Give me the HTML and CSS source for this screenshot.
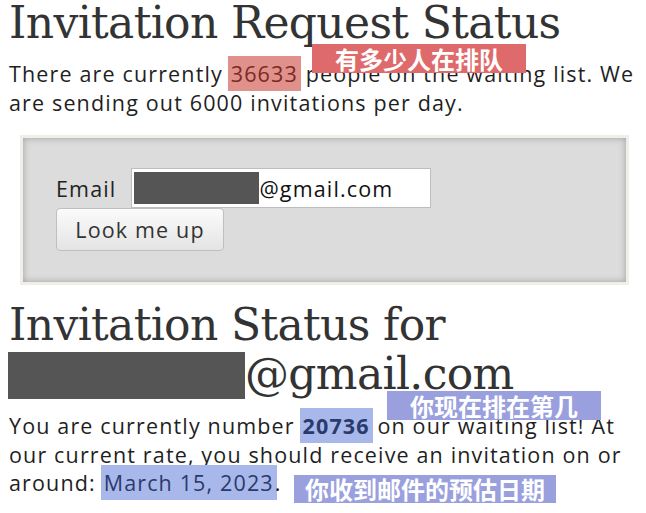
FILE: index.html
```html
<!DOCTYPE html>
<html lang="en">
<head>
<meta charset="utf-8">
<title>Invitation Request Status</title>
<link rel="stylesheet" href="styles.css">
</head>
<body>
<div class="page">
  <h1 class="title">Invitation Request Status</h1>
  <p class="text">There are currently <span class="hl hl-red">36633</span> people on the waiting list. We are sending out 6000 invitations per day.</p>

  <form class="lookup">
    <div class="field">
      <label class="label" for="email">Email</label>
      <div class="input" id="email"><span class="redact redact-sm"></span>@gmail.com</div>
    </div>
    <button class="btn" type="button">Look me up</button>
  </form>

  <h1 class="title title-2">Invitation Status for <span class="redact redact-lg"></span>@gmail.com</h1>
  <p class="text text-2">You are currently number <strong class="hl hl-blue">20736</strong> on our waiting list! At our current rate, you should receive an invitation on or around: <span class="hl hl-blue">March 15, 2023</span>.</p>

  <span class="note note-red">有多少人在排队</span>
  <span class="note note-blue note-rank">你现在排在第几</span>
  <span class="note note-blue note-date">你收到邮件的预估日期</span>
</div>
</body>
</html>
```

FILE: styles.css
```css
html, body {
  margin: 0;
  padding: 0;
  background: #ffffff;
}

.page {
  position: relative;
  width: 646px;
  height: 513px;
  overflow: hidden;
  padding: 0 6px 0 9px;
  box-sizing: border-box;
  color: #1f1f1f;
}

.title {
  margin: 0;
  font-family: "DejaVu Serif", "Liberation Serif", serif;
  font-weight: normal;
  font-size: 44px;
  line-height: 46px;
  color: #333333;
  letter-spacing: -0.65px;
}

.title-2 {
  margin-top: 15px;
  line-height: 49px;
}

.text {
  margin: 14px 0 0 0;
  font-family: "Open Sans", "DejaVu Sans", sans-serif;
  font-size: 21.5px;
  line-height: 28.5px;
  letter-spacing: 1.15px;
  color: #1f1f1f;
}

.text-2 {
  margin-top: 13px;
}

.hl {
  padding: 3px 3px;
  margin: 0 -2px;
}

.hl-red {
  background: #e0918b;
  color: #7a2a22;
}

.hl-blue {
  background: #a8b8ea;
  color: #2b3a6c;
}

strong.hl-blue {
  font-weight: bold;
}

.lookup {
  margin: 18px 11px 0 11px;
  border: 3px solid #f1eeea;
  background: #dcdcdc;
  box-shadow: inset 0 0 7px rgba(0, 0, 0, 0.28);
  padding: 30px 33px 31px 33px;
}

.field {
  display: flex;
  align-items: center;
  gap: 15px;
}

.label {
  font-family: "Open Sans", "DejaVu Sans", sans-serif;
  font-size: 21.5px;
  letter-spacing: 1.15px;
  color: #222222;
}

.input {
  display: flex;
  align-items: center;
  width: 300px;
  height: 40px;
  box-sizing: border-box;
  background: #ffffff;
  border: 1px solid #bdbdbd;
  padding: 0 2px;
  font-family: "Open Sans", "DejaVu Sans", sans-serif;
  font-size: 21.5px;
  letter-spacing: 1.15px;
  color: #111111;
}

.redact {
  display: inline-block;
  background: #555555;
}

.redact-sm {
  width: 125px;
  height: 32px;
}

.redact-lg {
  width: 237px;
  height: 47px;
  vertical-align: -10px;
  margin-left: -1px;
}

.btn {
  display: block;
  width: 168px;
  height: 43px;
  border: 1px solid #bfbfbf;
  border-radius: 4px;
  background: linear-gradient(#fbfbfb, #e4e4e4);
  font-family: "Open Sans", "DejaVu Sans", sans-serif;
  font-size: 21.5px;
  letter-spacing: 1.15px;
  color: #333333;
  padding: 0;
}

.note {
  position: absolute;
  display: flex;
  align-items: center;
  justify-content: center;
  font-family: "Noto Sans CJK SC", sans-serif;
  font-weight: bold;
  font-size: 24px;
  line-height: 1;
  color: #ffffff;
}

.note-red {
  left: 312px;
  top: 44px;
  width: 214px;
  height: 29px;
  background: #df6a6b;
}

.note-blue {
  background: #9a9fdd;
}

.note-rank {
  left: 387px;
  top: 391px;
  width: 214px;
  height: 29px;
}

.note-date {
  left: 294px;
  top: 475px;
  width: 262px;
  height: 28px;
}
```
